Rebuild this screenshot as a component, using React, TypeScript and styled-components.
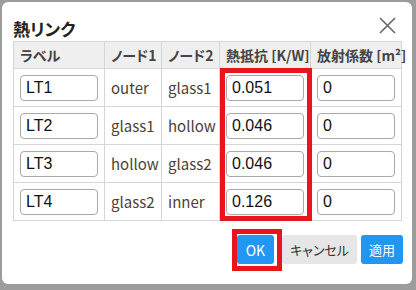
import { FC, ReactElement } from 'react';
import styled, { createGlobalStyle } from 'styled-components';

const rows = [
    { label: 'LT1', n1: 'outer', n2: 'glass1', r: '0.051', e: '0' },
    { label: 'LT2', n1: 'glass1', n2: 'hollow', r: '0.046', e: '0' },
    { label: 'LT3', n1: 'hollow', n2: 'glass2', r: '0.046', e: '0' },
    { label: 'LT4', n1: 'glass2', n2: 'inner', r: '0.126', e: '0' }
];

const App: FC = (): ReactElement => {
    return (
        <>
            <Global />
            <Dialog>
                <Header>
                    <Title>熱リンク</Title>
                    <Close aria-label="close">
                        <svg width="17" height="17" viewBox="0 0 17 17">
                            <path d="M1 1L16 16M16 1L1 16" stroke="#666" strokeWidth="1.6" fill="none" />
                        </svg>
                    </Close>
                </Header>
                <TableWrap>
                    <Table>
                        <colgroup>
                            <col style={{ width: 91 }} />
                            <col style={{ width: 57 }} />
                            <col style={{ width: 58 }} />
                            <col style={{ width: 91 }} />
                            <col style={{ width: 91 }} />
                        </colgroup>
                        <thead>
                            <tr>
                                <Th>ラベル</Th>
                                <Th>ノード1</Th>
                                <Th>ノード2</Th>
                                <Th>熱抵抗 [K/W]</Th>
                                <Th>放射係数 [m²]</Th>
                            </tr>
                        </thead>
                        <tbody>
                            {rows.map((row) => (
                                <tr key={row.label}>
                                    <Td>
                                        <Input defaultValue={row.label} />
                                    </Td>
                                    <Td>{row.n1}</Td>
                                    <Td>{row.n2}</Td>
                                    <Td>
                                        <Input defaultValue={row.r} />
                                    </Td>
                                    <Td>
                                        <Input defaultValue={row.e} />
                                    </Td>
                                </tr>
                            ))}
                        </tbody>
                    </Table>
                    <ColumnMark />
                </TableWrap>
                <Footer>
                    <Marked>
                        <Btn $primary $wide>OK</Btn>
                    </Marked>
                    <Btn>キャンセル</Btn>
                    <Btn $primary>適用</Btn>
                </Footer>
            </Dialog>
        </>
    );
};

const Global = createGlobalStyle`
    html, body {
        margin: 0;
        padding: 0;
        background: #9c9c9c;
        width: 416px;
        height: 290px;
        overflow: hidden;
    }
    * {
        box-sizing: border-box;
    }
`;

const Dialog = styled.div`
    margin: 2px 0 0 2px;
    width: 410px;
    height: 282px;
    background: #fff;
    border-radius: 6px;
    font-family: 'Noto Sans CJK JP', 'Noto Sans', sans-serif;
    font-feature-settings: 'palt';
    color: #333;
    display: flex;
    flex-direction: column;
`;

const Header = styled.header`
    height: 39px;
    padding: 0 0 0 11px;
    display: flex;
    align-items: center;
    justify-content: space-between;
`;

const Title = styled.h2`
    margin: 13px 0 0;
    font-size: 17px;
    font-weight: 700;
    color: #222;
`;

const Close = styled.button`
    border: none;
    background: none;
    padding: 0;
    margin: 7px 16px 0 0;
    width: 17px;
    height: 17px;
    display: flex;
`;

const TableWrap = styled.div`
    position: relative;
    margin-left: 11px;
    width: 389px;
`;

const Table = styled.table`
    width: 389px;
    table-layout: fixed;
    border-collapse: collapse;
    border: 1px solid #d6d6d6;
`;

const Th = styled.th`
    height: 27px;
    padding: 0 6px;
    background: #efefef;
    border: 1px solid #d6d6d6;
    text-align: left;
    font-size: 14px;
    font-weight: 700;
    color: #444;
    white-space: nowrap;
`;

const Td = styled.td`
    height: 38px;
    padding: 0 6px;
    border: 1px solid #d6d6d6;
    font-size: 15px;
    color: #4a4238;
    white-space: nowrap;
`;

const Input = styled.input`
    display: block;
    width: 100%;
    height: 26px;
    padding: 0 5px;
    border: 1px solid #a9a9a9;
    border-radius: 4px;
    font-family: 'Liberation Sans', Arial, sans-serif;
    font-size: 16px;
    color: #111;
    background: #fff;
`;

const ColumnMark = styled.div`
    position: absolute;
    left: 207px;
    top: 27px;
    width: 92px;
    height: 153px;
    border: 5px solid #e8151f;
    pointer-events: none;
`;

const Footer = styled.footer`
    margin-top: 14px;
    padding-right: 9px;
    display: flex;
    justify-content: flex-end;
    align-items: center;
    gap: 4px;
`;

const Marked = styled.span`
    position: relative;
    display: flex;
    margin-right: 4px;
    &::after {
        content: '';
        position: absolute;
        left: -5px;
        top: -6px;
        right: -8px;
        bottom: -7px;
        border: 5px solid #e8151f;
    }
`;

const Btn = styled.button<{ $primary?: boolean; $wide?: boolean }>`
    height: 29px;
    padding: 0 ${(p) => (p.$wide ? '9px' : '8px')};
    border: none;
    border-radius: 3px;
    font-family: 'Noto Sans CJK JP', 'Noto Sans', sans-serif;
    font-feature-settings: 'palt';
    font-size: ${(p) => (p.$wide ? '14px' : '13px')};
    background: ${(p) => (p.$primary ? '#2196f3' : '#e6e6e6')};
    color: ${(p) => (p.$primary ? '#fff' : '#333')};
`;

export default App;
